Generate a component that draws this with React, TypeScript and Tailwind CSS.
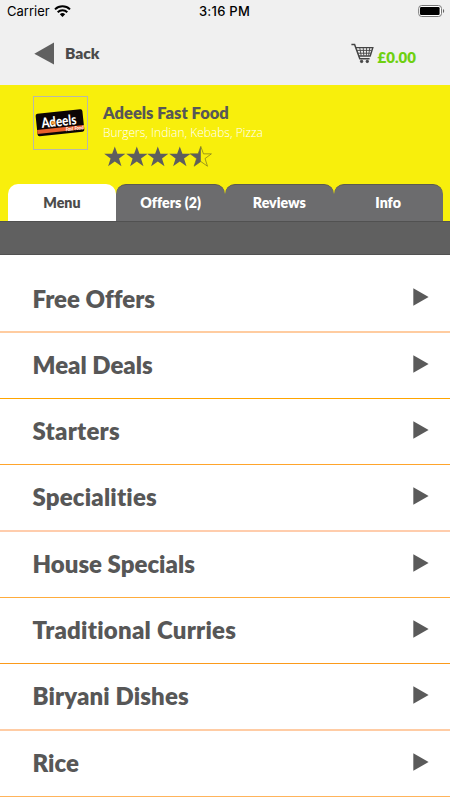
import { clsx } from 'clsx';

const tabs = ['Menu', 'Offers (2)', 'Reviews', 'Info'];

const categories = [
  { name: 'Free Offers', line: 'h-[66px] border-b-2 border-[#ffcca0]' },
  { name: 'Meal Deals', line: 'h-[66px] border-b border-[#ffa500]' },
  { name: 'Starters', line: 'h-[66px] border-b border-[#ffa52c] tracking-[0.25px]' },
  { name: 'Specialities', line: 'h-[67px] border-b-2 border-[#ffcdad] tracking-[0.18px]' },
  { name: 'House Specials', line: 'h-[66px] border-b border-[#ffac3c]' },
  { name: 'Traditional Curries', line: 'h-[66px] border-b border-[#fb9a1a] tracking-[0.24px]' },
  { name: 'Biryani Dishes', line: 'h-[67px] border-b-2 border-[#ffcca4] tracking-[0.12px]' },
  { name: 'Rice', line: 'h-[66px] border-b border-[#ffb45c]' },
];

const StatusBar = () => (
  <div className="flex h-6 items-center justify-between pl-[7px] pr-[5px] font-['Inter',sans-serif] text-[13px] text-black">
    <div className="flex w-[148px] items-center gap-[4px]">
      <span>Carrier</span>
      <svg width="17" height="12" viewBox="0 0 17 12" className="-mt-[2px]" fill="none" stroke="#000" strokeWidth="2">
        <path d="M1 4.4a10.8 10.8 0 0 1 15 0" />
        <path d="M3.7 7.3a6.8 6.8 0 0 1 9.6 0" />
        <path d="M8.5 12 5.8 9.2a3.9 3.9 0 0 1 5.4 0z" fill="#000" stroke="none" />
      </svg>
    </div>
    <span className="font-medium tracking-[0.25px]">3:16 PM</span>
    <div className="flex w-[151px] justify-end">
      <svg width="27" height="12" viewBox="0 0 27 12" className="-mt-[2px]">
        <rect x="0.7" y="0.5" width="22.8" height="11" rx="3" fill="#fff" stroke="#777" />
        <rect x="2" y="2" width="19.6" height="8" rx="1.2" />
        <path d="M25 4v4q1.2-.6 1.2-2T25 4z" fill="#666" />
      </svg>
    </div>
  </div>
);

const Cart = () => (
  <svg width="23" height="21" viewBox="0 0 23 21" fill="none" stroke="#444">
    <path d="M.4 1.5h3.2l5.2 14.2h9.8" strokeWidth="1.5" />
    <path d="M4.6 4.6h17.2l-2.6 8.4H7.8" strokeWidth="1.4" />
    <path d="M5.6 7.4h15M6.8 10.2h13M8.7 4.6l1.5 8M12.2 4.6l.6 8M15.6 4.6l-.2 8M18.8 4.6l-1.2 8" strokeWidth=".9" />
    <circle cx="10.6" cy="18.4" r="1.2" fill="#444" />
    <circle cx="16.3" cy="18.4" r="1.2" fill="#444" />
  </svg>
);

const Logo = () => (
  <div className="flex h-[54px] w-[55px] items-center justify-center border border-[#b9b9a9]">
    <svg width="53" height="32" viewBox="0 0 53 32">
      <g transform="rotate(-6 26 16)">
        <rect x="2.5" y="4.5" width="47" height="22.5" rx="2" fill="#0c0504" />
        <path d="M2.5 20.5h47v4h-47z" fill="#e8602b" />
        <text x="7.5" y="19" fill="#fff" fontFamily="Lato, sans-serif" fontWeight="900" fontSize="14" textLength="35" lengthAdjust="spacingAndGlyphs">
          Adeels
        </text>
        <circle cx="19.4" cy="15.2" r="1.8" fill="#f5a03c" />
        <text x="31" y="24.8" fill="#fff" fontFamily="Lato, sans-serif" fontStyle="italic" fontWeight="700" fontSize="5.5" textLength="18" lengthAdjust="spacingAndGlyphs">
          Fast Food
        </text>
      </g>
    </svg>
  </div>
);

const STAR = 'M11 .2l2.7 7.6h8.1l-6.5 4.8 2.5 7.8-6.8-4.8-6.8 4.8 2.5-7.8L.2 7.8h8.1z';

const Star = ({ half }: { half?: boolean }) => (
  <svg width="21.6" height="21" viewBox="0 0 22 21">
    {half ? (
      <>
        <path d={STAR} fill="none" stroke="#77741f" strokeWidth=".7" />
        <path d="M11 .2v15.4l-6.8 4.8 2.5-7.8L.2 7.8h8.1z" fill="#5e5e5e" />
      </>
    ) : (
      <path d={STAR} fill="#5e5e5e" />
    )}
  </svg>
);

const App = () => {
  return (
    <div className="h-[800px] w-[450px] overflow-hidden bg-white font-['Lato',sans-serif] text-[#575757] [font-variant-ligatures:none]">
      <header className="h-[85px] bg-[#f0f0f0]">
        <StatusBar />
        <div className="flex justify-between pl-[34px] pr-[34px] pt-[17px]">
          <div className="flex h-6 items-center gap-[11px]">
            <svg width="20" height="23" viewBox="0 0 20 23">
              <path d="M.3 11.7 20 .4v22.2z" fill="#606060" />
            </svg>
            <span className="pt-[2px] text-[15.5px] font-extrabold text-[#4a4a4a]">Back</span>
          </div>
          <div className="flex gap-[4px] pt-[2px]">
            <Cart />
            <span className="pt-[4px] text-[15px] leading-5 font-extrabold text-[#6fd012]">£0.00</span>
          </div>
        </div>
      </header>

      <section className="h-[136px] bg-[#f8ef0c]">
        <div className="flex h-[99px] gap-[15.5px] pl-[32.5px] pt-[11px]">
          <Logo />
          <div className="pt-[7px]">
            <h1 className="text-[16.5px] leading-5 font-extrabold">Adeels Fast Food</h1>
            <p className="font-['Open_Sans',sans-serif] text-[12px] leading-5 font-light text-white">
              Burgers, Indian, Kebabs, Pizza
            </p>
            <div className="mt-[3px] flex pl-px">
              <Star />
              <Star />
              <Star />
              <Star />
              <Star half />
            </div>
          </div>
        </div>
        <nav className="flex h-[37px] pl-[7.5px] pr-[7.5px]">
          {tabs.map((tab, i) => (
            <div
              key={tab}
              className={clsx(
                'flex flex-1 items-center justify-center rounded-t-[10px] text-[14.2px] font-extrabold',
                i === 0 ? 'bg-white text-[#4c4c4c]' : 'border-t border-[#5b5b50] bg-[#6c6c6e] text-white'
              )}
            >
              {tab}
            </div>
          ))}
        </nav>
      </section>

      <div className="h-[34px] border-t border-b border-[#515151] bg-[#606060]" />

      <ul className="pt-[12px]">
        {categories.map(({ name, line }) => (
          <li key={name} className={clsx('flex items-center justify-between pb-px pl-[32.5px] pr-[21px]', line)}>
            <span className="text-[24px] font-extrabold">{name}</span>
            <svg width="16" height="18" viewBox="0 0 16 18" className="mb-[3px]">
              <path d="M.3.3 15.6 9 .3 17.7z" fill="#5a5a5a" />
            </svg>
          </li>
        ))}
      </ul>
    </div>
  );
};

export default App;
